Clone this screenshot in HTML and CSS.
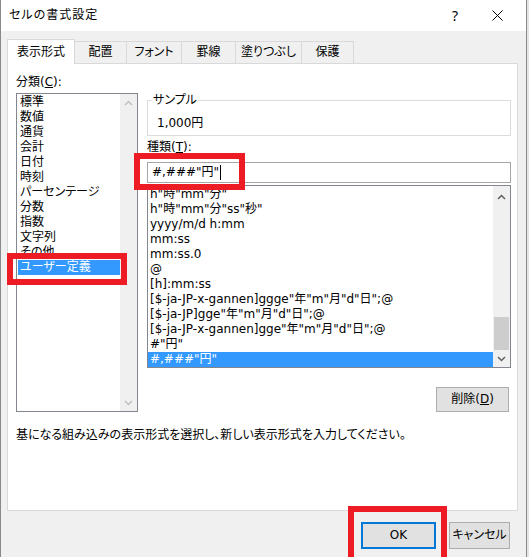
FILE: index.html
```html
<!DOCTYPE html>
<html lang="ja">
<head>
<meta charset="utf-8">
<title>セルの書式設定</title>
<link rel="stylesheet" href="styles.css">
</head>
<body>
<div class="dialog">
  <div class="titlebar">
    <span class="title">セルの書式設定</span>
    <span class="tb-btns">
      <span class="tb-btn help">?</span>
      <span class="tb-btn close"><svg width="11" height="11" viewBox="0 0 11 11"><path d="M0.5 0.5 L10.5 10.5 M10.5 0.5 L0.5 10.5" stroke="#000" stroke-width="1" fill="none"/></svg></span>
    </span>
  </div>
  <div class="tabs">
    <div class="tab active t1">表示形式</div>
    <div class="tab t2">配置</div>
    <div class="tab t3">フォント</div>
    <div class="tab t4">罫線</div>
    <div class="tab t5">塗りつぶし</div>
    <div class="tab t6">保護</div>
  </div>
  <div class="panel">
    <div class="cols">
      <div class="left">
        <div class="label">分類(<u>C</u>):</div>
        <div class="listbox cat">
          <ul class="items">
            <li>標準</li>
            <li>数値</li>
            <li>通貨</li>
            <li>会計</li>
            <li>日付</li>
            <li>時刻</li>
            <li>パーセンテージ</li>
            <li>分数</li>
            <li>指数</li>
            <li>文字列</li>
            <li>その他</li>
            <li class="sel">ユーザー定義</li>
          </ul>
          <div class="vscroll disabled">
            <div class="sb-btn"><svg width="9" height="6" viewBox="0 0 9 6"><path d="M1 5 L4.5 1.5 L8 5" fill="none" stroke-width="1.5"/></svg></div>
            <div class="sb-track"></div>
            <div class="sb-btn"><svg width="9" height="6" viewBox="0 0 9 6"><path d="M1 1 L4.5 4.5 L8 1" fill="none" stroke-width="1.5"/></svg></div>
          </div>
        </div>
      </div>
      <div class="right">
        <fieldset class="sample">
          <legend>サンプル</legend>
          <div class="sample-val">1,000円</div>
        </fieldset>
        <div class="label kind">種類(<u>T</u>):</div>
        <div class="input">#,###"円"<span class="caret"></span></div>
        <div class="listbox fmt">
          <ul class="items">
            <li>h"時"mm"分"</li>
            <li>h"時"mm"分"ss"秒"</li>
            <li>yyyy/m/d h:mm</li>
            <li>mm:ss</li>
            <li>mm:ss.0</li>
            <li>@</li>
            <li>[h]:mm:ss</li>
            <li>[$-ja-JP-x-gannen]ggge"年"m"月"d"日";@</li>
            <li>[$-ja-JP]gge"年"m"月"d"日";@</li>
            <li>[$-ja-JP-x-gannen]gge"年"m"月"d"日";@</li>
            <li>#"円"</li>
            <li class="sel">#,###"円"</li>
          </ul>
          <div class="vscroll">
            <div class="sb-btn up"><svg width="9" height="6" viewBox="0 0 9 6"><path d="M1 5 L4.5 1.5 L8 5" fill="none" stroke-width="1.5"/></svg></div>
            <div class="sb-track"><div class="sb-thumb"></div></div>
            <div class="sb-btn"><svg width="9" height="6" viewBox="0 0 9 6"><path d="M1 1 L4.5 4.5 L8 1" fill="none" stroke-width="1.5"/></svg></div>
          </div>
        </div>
        <div class="btn-row"><button class="btn del">削除(<u>D</u>)</button></div>
      </div>
    </div>
    <p class="hint">基になる組み込みの表示形式を選択し、新しい表示形式を入力してください。</p>
  </div>
  <div class="footer">
    <button class="btn ok">OK</button>
    <button class="btn cancel">キャンセル</button>
  </div>
  <div class="mark mark-cat"></div>
  <div class="mark mark-input"></div>
  <div class="mark mark-ok"></div>
</div>
</body>
</html>
```
FILE: styles.css
```css
* { box-sizing: border-box; }
html, body { margin: 0; padding: 0; }
body {
  width: 529px;
  height: 557px;
  overflow: hidden;
  background: #e4e4e4;
  font-family: "DejaVu Sans", "Noto Sans CJK JP", sans-serif;
  font-size: 12px;
  line-height: 15px;
  color: #000;
  font-feature-settings: "palt";
}
.dialog {
  position: relative;
  width: 527px;
  height: 557px;
  background: #f0f0f0;
  border-left: 1px solid #8a8a8a;
  border-right: 1px solid #8a8a8a;
}
.titlebar {
  height: 31px;
  background: #fff;
  display: flex;
  align-items: center;
  justify-content: space-between;
  padding-left: 8px;
  padding-right: 7px;
}
.title { letter-spacing: 1px; }
.tb-btns { display: flex; align-items: center; height: 31px; }
.tb-btn { display: flex; align-items: center; justify-content: center; height: 31px; }
.help { width: 40px; font-family: "Noto Sans", sans-serif; font-size: 14px; }
.close { width: 44px; }
.tabs {
  display: flex;
  align-items: flex-end;
  height: 25px;
  margin-top: 8px;
  padding-left: 6px;
  position: relative;
  z-index: 2;
}
.tab {
  height: 22px;
  margin-bottom: 1px;
  margin-left: -1px;
  border: 1px solid #d9d9d9;
  border-bottom: none;
  background: #f0f0f0;
  display: flex;
  align-items: center;
  justify-content: center;
  white-space: nowrap;
}
.tab.active {
  height: 25px;
  margin-bottom: 0;
  margin-left: 0;
  background: #fff;
  position: relative;
  z-index: 3;
}
.t1 { width: 68px; }
.t2 { width: 53px; }
.t3 { width: 56px; }
.t4 { width: 55px; }
.t5 { width: 67px; }
.t6 { width: 53px; }
.panel {
  margin-left: 6px;
  margin-top: -1px;
  width: 511px;
  height: 448px;
  background: #fff;
  border: 1px solid #d9d9d9;
  padding: 11px 5px 0 8px;
}
.cols { display: flex; align-items: flex-start; }
.left { width: 122px; }
.label { height: 15px; white-space: nowrap; }
.listbox {
  border: 1px solid #828790;
  display: flex;
  background: #fff;
}
.items {
  list-style: none;
  margin: 0;
  padding: 1px 0 0 0;
  flex: 1;
  min-width: 0;
}
.items li {
  height: 15px;
  line-height: 15px;
  white-space: nowrap;
  overflow: hidden;
}
.items li.sel { background: #3399ff; color: #fff; }
.cat { margin-top: 3px; height: 319px; }
.cat .items { margin-left: 1px; }
.cat .items li { padding-left: 2px; }
.vscroll {
  width: 17px;
  background: #f0f0f0;
  display: flex;
  flex-direction: column;
}
.sb-btn {
  height: 17px;
  display: flex;
  align-items: center;
  justify-content: center;
  stroke: #606060;
}
.sb-btn.up { padding-top: 4px; }
.vscroll.disabled .sb-btn { stroke: #c0c0c0; }
.sb-track {
  flex: 1;
  display: flex;
  flex-direction: column;
  justify-content: flex-end;
  align-items: center;
}
.sb-thumb { width: 15px; height: 33px; background: #cdcdcd; }
.right { width: 364px; margin-left: 9px; }
.sample {
  margin: 18px 0 0 0;
  padding: 8px 0 4px 0;
  border: 1px solid #dcdcdc;
  min-width: 0;
}
.sample legend {
  margin-left: 4px;
  padding: 0 1px;
  line-height: 15px;
}
.sample-val { margin-left: 9px; height: 15px; }
.kind { margin-top: 4px; }
.input {
  margin-top: 7px;
  height: 21px;
  border: 1px solid #a6a6a6;
  padding: 2px 0 0 4px;
  white-space: nowrap;
  display: flex;
  align-items: flex-start;
}
.caret {
  display: inline-block;
  width: 1px;
  height: 15px;
  background: #000;
  margin-left: 1px;
}
.fmt { margin-top: 2px; height: 183px; }
.fmt .items li { padding-left: 2px; }
.btn-row { display: flex; justify-content: flex-end; margin-top: 19px; padding-right: 2px; }
.btn {
  font: inherit;
  font-feature-settings: "palt";
  color: #000;
  background: #e1e1e1;
  border: 1px solid #adadad;
  padding: 0;
  margin: 0;
  display: flex;
  align-items: center;
  justify-content: center;
}
.del { width: 73px; height: 25px; }
.hint { margin: 16px 0 0 0; white-space: nowrap; }
.footer {
  display: flex;
  justify-content: flex-end;
  gap: 13px;
  margin-top: 11px;
  padding-right: 16px;
}
.ok { width: 75px; height: 27px; border: 2px solid #0078d7; }
.cancel { width: 61px; height: 27px; }
.mark {
  position: absolute;
  border: 6px solid #ed1c24;
  z-index: 5;
}
.mark-cat { left: 6px; top: 253px; width: 120px; height: 32px; }
.mark-input { left: 133px; top: 153px; width: 111px; height: 37px; }
.mark-ok { left: 347px; top: 506px; width: 99px; height: 60px; }
```
